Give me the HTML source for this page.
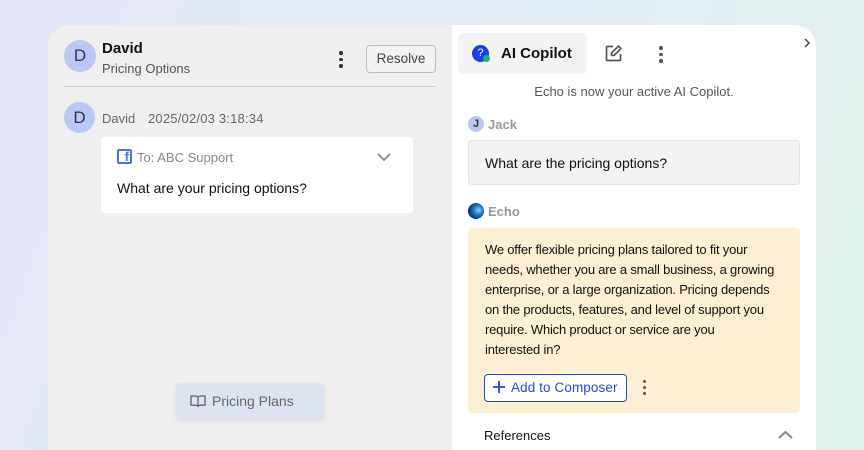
<!DOCTYPE html>
<html style="width:864px;height:450px;overflow:hidden"><head><meta charset="utf-8"><style>
*{box-sizing:border-box;margin:0;padding:0}
body{width:864px;height:450px;overflow:hidden;background:linear-gradient(110deg,#e4e6f8 0%,#e2ecf4 55%,#dff3ec 100%);font-family:"Liberation Sans",sans-serif;position:relative}
.a{position:absolute;white-space:nowrap}
.card{position:absolute;left:48px;top:25px;width:768px;height:425px;border-radius:22px 22px 0 0;overflow:hidden;background:#fff}
.left{position:absolute;left:0;top:0;width:404px;height:100%;background:#efefef}
.av{position:absolute;border-radius:50%;background:#bac8f6;color:#2f3448;text-align:center;font-size:17px}
.dots{position:absolute;width:4px}
.dots i{display:block;width:3.5px;height:3.5px;border-radius:50%;background:#333;margin-bottom:3px}
</style></head><body>
<div class="card">
<div class="left"></div>
</div>
<!-- left -->
<div class="av" style="left:64px;top:40px;width:32px;height:32px;line-height:32px">D</div>
<div class="a" style="left:102px;top:40px;font-size:15px;font-weight:bold;color:#111">David</div>
<div class="a" style="left:102px;top:61px;font-size:13px;color:#555">Pricing Options</div>
<div class="dots" style="left:339px;top:51px"><i></i><i></i><i></i></div>
<div class="a" style="left:366px;top:45px;width:70px;height:28px;border:1px solid #bdbdbd;border-radius:4px;background:#f3f3f3;font-size:13.5px;color:#444;text-align:center;line-height:26px">Resolve</div>
<div class="a" style="left:64px;top:86px;width:372px;height:1px;background:#cfcfcf"></div>
<div class="av" style="left:64px;top:102px;width:31px;height:31px;line-height:31px">D</div>
<div class="a" style="left:102px;top:111px;font-size:13px;color:#666">David</div>
<div class="a" style="left:148px;top:111px;font-size:13px;color:#666;letter-spacing:.2px">2025/02/03 3:18:34</div>
<div class="a" style="left:101px;top:137px;width:312px;height:76px;background:#fff;border-radius:3px"></div>
<div class="a" style="left:117px;top:149px;width:15px;height:15px;border:2px solid #4a74d8;border-radius:2px;color:#4a74d8;font-size:13px;font-weight:bold;line-height:12px;text-align:right;padding-right:1px;overflow:hidden">f</div>
<div class="a" style="left:137px;top:150px;font-size:13px;color:#888">To: ABC Support</div>
<svg class="a" style="left:377px;top:152px" width="14" height="10"><path d="M1 2l6 6 6-6" fill="none" stroke="#888" stroke-width="1.8"/></svg>
<div class="a" style="left:117px;top:180px;font-size:14px;color:#111">What are your pricing options?</div>
<div class="a" style="left:176px;top:383px;width:148px;height:36px;background:#dde3f0;border-radius:4px;box-shadow:0 2px 5px rgba(0,0,0,.08)"></div>
<svg class="a" style="left:190px;top:394px" width="16" height="14"><path d="M1 2h4.5c1.5 0 2.5 1 2.5 2v9c0-1-1-1.8-2.5-1.8H1zM15 2h-4.5C9 2 8 3 8 4v9c0-1 1-1.8 2.5-1.8H15z" fill="none" stroke="#666" stroke-width="1.3"/></svg>
<div class="a" style="left:212px;top:393px;font-size:14px;color:#666">Pricing Plans</div>
<!-- right -->
<div class="a" style="left:458px;top:33px;width:129px;height:41px;background:#f3f3f3;border-radius:6px"></div>
<div class="a" style="left:472px;top:45px;width:17px;height:17px;border-radius:50%;background:#1b3fe0;color:#fff;font-size:11px;text-align:center;line-height:17px">?</div>
<div class="a" style="left:483px;top:55px;width:7px;height:7px;border-radius:50%;background:#1fb36b"></div>
<div class="a" style="left:501px;top:45px;font-size:15px;font-weight:bold;color:#111">AI Copilot</div>
<svg class="a" style="left:604px;top:44px" width="19" height="19"><path d="M9 2.5H3.5a1 1 0 0 0-1 1v12a1 1 0 0 0 1 1h12a1 1 0 0 0 1-1V10" fill="none" stroke="#555" stroke-width="1.7"/><path d="M14.5 2l2.5 2.5-7 7H7.5V9z" fill="none" stroke="#555" stroke-width="1.6" stroke-linejoin="round"/></svg>
<div class="dots" style="left:659px;top:46px"><i style="background:#555"></i><i style="background:#555"></i><i style="background:#555"></i></div>
<svg class="a" style="left:803px;top:38px" width="8" height="10"><path d="M2 1l4 4-4 4" fill="none" stroke="#444" stroke-width="1.5"/></svg>
<div class="a" style="left:452px;top:84px;width:364px;text-align:center;font-size:13px;color:#555">Echo is now your active AI Copilot.</div>
<div class="av" style="left:468px;top:116px;width:16px;height:16px;line-height:16px;font-size:11px;font-weight:bold">J</div>
<div class="a" style="left:488px;top:117px;font-size:13px;font-weight:bold;color:#999">Jack</div>
<div class="a" style="left:468px;top:140px;width:332px;height:45px;background:#f3f3f3;border:1px solid #e3e3e3;border-radius:4px"></div>
<div class="a" style="left:485px;top:155px;font-size:14px;color:#111">What are the pricing options?</div>
<div class="a" style="left:468px;top:203px;width:16px;height:16px;border-radius:50%;background:radial-gradient(circle at 65% 45%,#7fd8ff 0,#1a78d0 35%,#0b2a55 75%)"></div>
<div class="a" style="left:488px;top:204px;font-size:13px;font-weight:bold;color:#999">Echo</div>
<div class="a" style="left:468px;top:228px;width:332px;height:185px;background:#fdefd3;border-radius:4px"></div>
<div class="a" style="left:485px;top:240px;font-size:13px;line-height:20px;color:#111;letter-spacing:-.2px">We offer flexible pricing plans tailored to fit your<br>needs, whether you are a small business, a growing<br>enterprise, or a large organization. Pricing depends<br>on the products, features, and level of support you<br>require. Which product or service are you<br>interested in?</div>
<div class="a" style="left:484px;top:374px;width:143px;height:28px;border:1.5px solid #2449d8;border-radius:4px;background:#fff"></div>
<svg class="a" style="left:492px;top:380px" width="14" height="14"><path d="M7 1v12M1 7h12" stroke="#2449d8" stroke-width="1.8"/></svg>
<div class="a" style="left:511px;top:380px;font-size:13.5px;color:#2449d8;letter-spacing:.1px">Add to Composer</div>
<div class="dots" style="left:643px;top:380px"><i style="background:#555;width:3px;height:3px"></i><i style="background:#555;width:3px;height:3px"></i><i style="background:#555;width:3px;height:3px"></i></div>
<div class="a" style="left:484px;top:428px;font-size:13px;color:#111">References</div>
<svg class="a" style="left:778px;top:430px" width="15" height="10"><path d="M1 8l6.5-6 6.5 6" fill="none" stroke="#888" stroke-width="2"/></svg>
</body></html>
